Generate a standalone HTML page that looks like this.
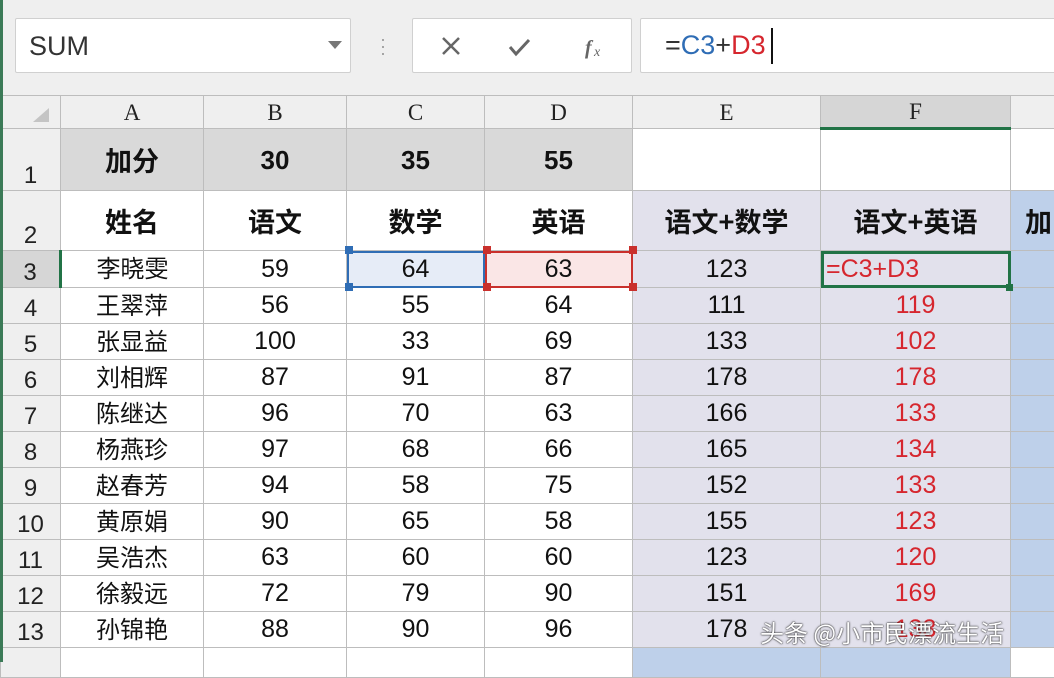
<!DOCTYPE html>
<html><head><meta charset="utf-8"><style>
*{margin:0;padding:0;box-sizing:border-box}
body{width:1054px;height:662px;overflow:hidden;background:#efefef;font-family:"Liberation Sans","Noto Sans CJK SC",sans-serif;position:relative}
.box{position:absolute;background:#fff;border:1px solid #d0d0d0;border-radius:2px}
table{position:absolute;left:0;top:95px;border-collapse:collapse;table-layout:fixed;width:1080px}
td{border:1px solid #bdbdbd;text-align:center;font-size:25px;line-height:1;color:#111;overflow:hidden;white-space:nowrap;padding:0;background:#fff}
td.h{background:#efefef;font-family:"Liberation Serif","Noto Serif CJK SC",serif;font-size:23px;color:#222}
td.rh{background:#efefef;font-size:24px;color:#222;text-align:center;vertical-align:bottom;padding-bottom:2px}
.g{background:#d9d9d9!important;font-weight:bold;font-size:26px}
.b{font-weight:bold;font-size:27px;font-family:"Noto Sans CJK SC",sans-serif}
.l{background:#e2e1ec!important}
.bl{background:#bed0ea!important}
.r{color:#d6262e}
.cn{font-family:"Noto Sans CJK SC",sans-serif;font-size:24px;line-height:1}
.cn span{position:relative;top:-2px}
</style></head><body>
<div class="box" style="left:15px;top:18px;width:336px;height:55px"><span style="position:absolute;left:13px;top:12px;font-size:27px;color:#333">SUM</span><span style="position:absolute;left:312px;top:22px;width:0;height:0;border-left:7px solid transparent;border-right:7px solid transparent;border-top:8px solid #777"></span></div>
<div style="position:absolute;left:380px;top:36px;color:#999;font-size:18px;line-height:7px">·<br>·<br>·</div>
<div class="box" style="left:412px;top:18px;width:220px;height:55px">
<svg width="220" height="55" style="position:absolute;left:0;top:0"><path d="M30 19l16 16M46 19l-16 16" stroke="#666" stroke-width="2.5"/><path d="M97 28l6 7 13-14" stroke="#666" stroke-width="3" fill="none"/><text x="172" y="35" font-family="Liberation Serif" font-style="italic" font-weight="bold" font-size="20" fill="#666">f</text><text x="181" y="37" font-family="Liberation Serif" font-style="italic" font-size="14" fill="#666">x</text></svg></div>
<div class="box" style="left:640px;top:18px;width:420px;height:55px"><span style="position:absolute;left:24px;top:11px;font-size:27px;color:#333">=<span style="color:#2f6db5">C3</span>+<span style="color:#d6262e">D3</span></span><span style="position:absolute;left:130px;top:9px;width:2px;height:36px;background:#111"></span></div>
<table>
<colgroup><col style="width:60px"><col style="width:143px"><col style="width:143px"><col style="width:138px"><col style="width:148px"><col style="width:188px"><col style="width:190px"><col style="width:70px"></colgroup>
<tr style="height:33px"><td class="h" style="vertical-align:bottom"><svg width="30" height="20" style="margin-left:14px"><path d="M26 4V18H10Z" fill="#c4c4c4"/></svg></td><td class="h">A</td><td class="h">B</td><td class="h">C</td><td class="h">D</td><td class="h">E</td><td class="h" style="background:#d6d6d6;border-bottom:3px solid #217346">F</td><td class="h" style="background:#efefef"></td></tr>
<tr style="height:62px"><td class="rh">1</td><td class="g b">加分</td><td class="g">30</td><td class="g">35</td><td class="g">55</td><td></td><td></td><td></td></tr>
<tr style="height:60px"><td class="rh">2</td><td class="b">姓名</td><td class="b">语文</td><td class="b">数学</td><td class="b">英语</td><td class="b l">语文+数学</td><td class="b l">语文+英语</td><td class="b bl" style="text-align:left;padding-left:14px">加</td></tr>
<tr style="height:37px"><td class="rh" style="background:#d6d6d6;border-right:3px solid #217346">3</td><td class="cn"><span>李晓雯</span></td><td>59</td><td style="background:#e6ecf7;outline:2px solid #2f6db5;outline-offset:-2px">64</td><td style="background:#fae6e6;outline:2px solid #c9302c;outline-offset:-2px">63</td><td class="l">123</td><td class="l r" style="text-align:left;padding-left:5px;outline:3px solid #217346;outline-offset:-3px">=C3+D3</td><td class="bl"></td></tr>
<tr style="height:36px"><td class="rh">4</td><td class="cn"><span>王翠萍</span></td><td>56</td><td>55</td><td>64</td><td class="l">111</td><td class="l r">119</td><td class="bl"></td></tr>
<tr style="height:36px"><td class="rh">5</td><td class="cn"><span>张显益</span></td><td>100</td><td>33</td><td>69</td><td class="l">133</td><td class="l r">102</td><td class="bl"></td></tr>
<tr style="height:36px"><td class="rh">6</td><td class="cn"><span>刘相辉</span></td><td>87</td><td>91</td><td>87</td><td class="l">178</td><td class="l r">178</td><td class="bl"></td></tr>
<tr style="height:36px"><td class="rh">7</td><td class="cn"><span>陈继达</span></td><td>96</td><td>70</td><td>63</td><td class="l">166</td><td class="l r">133</td><td class="bl"></td></tr>
<tr style="height:36px"><td class="rh">8</td><td class="cn"><span>杨燕珍</span></td><td>97</td><td>68</td><td>66</td><td class="l">165</td><td class="l r">134</td><td class="bl"></td></tr>
<tr style="height:36px"><td class="rh">9</td><td class="cn"><span>赵春芳</span></td><td>94</td><td>58</td><td>75</td><td class="l">152</td><td class="l r">133</td><td class="bl"></td></tr>
<tr style="height:36px"><td class="rh">10</td><td class="cn"><span>黄原娟</span></td><td>90</td><td>65</td><td>58</td><td class="l">155</td><td class="l r">123</td><td class="bl"></td></tr>
<tr style="height:36px"><td class="rh">11</td><td class="cn"><span>吴浩杰</span></td><td>63</td><td>60</td><td>60</td><td class="l">123</td><td class="l r">120</td><td class="bl"></td></tr>
<tr style="height:36px"><td class="rh">12</td><td class="cn"><span>徐毅远</span></td><td>72</td><td>79</td><td>90</td><td class="l">151</td><td class="l r">169</td><td class="bl"></td></tr>
<tr style="height:36px"><td class="rh">13</td><td class="cn"><span>孙锦艳</span></td><td>88</td><td>90</td><td>96</td><td class="l">178</td><td class="l r">133</td><td class="bl"></td></tr>
<tr style="height:30px"><td class="rh"></td><td></td><td></td><td></td><td></td><td class="bl"></td><td class="bl"></td><td></td></tr>
</table>
<div style="position:absolute;left:0;top:0;width:3px;height:662px;background:#3b7a57"></div>
<div style="position:absolute;left:345px;top:246px;width:8px;height:8px;background:#2f6db5"></div>
<div style="position:absolute;left:345px;top:283px;width:8px;height:8px;background:#2f6db5"></div>
<div style="position:absolute;left:483px;top:246px;width:8px;height:8px;background:#c9302c"></div>
<div style="position:absolute;left:483px;top:283px;width:8px;height:8px;background:#c9302c"></div>
<div style="position:absolute;left:629px;top:246px;width:8px;height:8px;background:#c9302c"></div>
<div style="position:absolute;left:629px;top:283px;width:8px;height:8px;background:#c9302c"></div>
<div style="position:absolute;left:1006px;top:284px;width:7px;height:7px;background:#217346"></div>
<div style="position:absolute;left:760px;top:614px;font-family:'Noto Sans CJK SC',sans-serif;font-size:24px;color:#fff;text-shadow:0 0 2px #333,0 0 1px #000">头条 @小市民漂流生活</div>
</body></html>
